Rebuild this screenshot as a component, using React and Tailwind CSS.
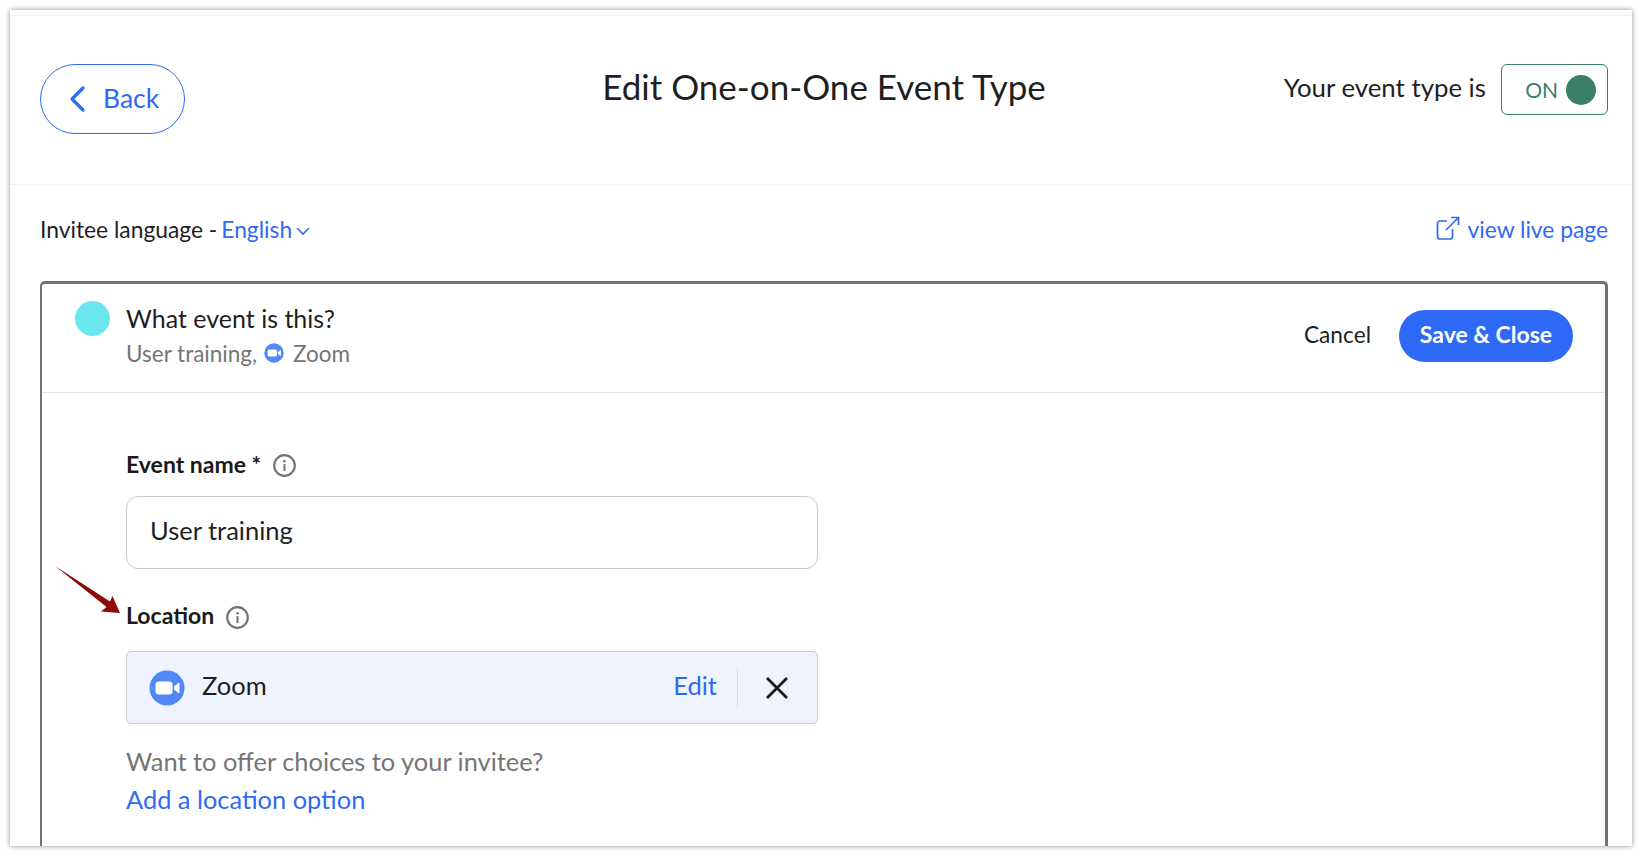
import React from 'react';

const BLUE = 'text-[#2e6af6]';

function ZoomIcon({ size }) {
  return (
    <svg width={size} height={size} viewBox="0 0 36 36" className="shrink-0">
      <circle cx="18" cy="18" r="17.5" fill="#5088f6" />
      <rect x="6.5" y="11.5" width="17" height="13" rx="3" fill="#fff" />
      <path d="M25 16.5l4.6-3.7c.4-.3.9 0 .9.4v9.6c0 .5-.5.7-.9.4L25 19.5z" fill="#fff" />
    </svg>
  );
}

function InfoIcon() {
  return (
    <svg width="23" height="23" viewBox="0 0 23 23" className="shrink-0" fill="none">
      <circle cx="11.5" cy="11.5" r="10.3" stroke="#747474" strokeWidth="2.2" />
      <rect x="10.5" y="10" width="2" height="7" fill="#747474" />
      <circle cx="11.5" cy="7.2" r="1.3" fill="#747474" />
    </svg>
  );
}

function BoldLabel({ children }) {
  return <span className="text-[23px] font-bold leading-none text-[#1a1a1a]">{children}</span>;
}

export default function App() {
  return (
    <div
      className="w-[1642px] h-[856px] overflow-hidden bg-white p-[10px]"
      style={{ fontFamily: 'Lato, "Liberation Sans", sans-serif' }}
    >
      <div className="relative h-full w-full overflow-hidden bg-white shadow-[0_0_5px_rgba(0,0,0,0.45)]">
        <div className="mt-[5px] h-[170px] border-y border-[#f1f1f1] pl-[30px] pr-[24px] pt-[48px] grid grid-cols-[1fr_auto_1fr] items-start">
          <div>
            <button className="flex w-[145px] h-[70px] items-center rounded-[35px] border border-[#2e6af6] pl-[27px] text-[#2e6af6]">
              <svg width="18" height="28" viewBox="0 0 18 28" fill="none" className="shrink-0">
                <path d="M15 3L4 14l11 11" stroke="#2e6af6" strokeWidth="3.2" strokeLinecap="round" strokeLinejoin="round" />
              </svg>
              <span className="ml-[17px] -mt-[2px] text-[26.5px] leading-none">Back</span>
            </button>
          </div>
          <h1 className="text-[35px] leading-none pt-[5px] text-[#1f1f1f] whitespace-nowrap">Edit One-on-One Event Type</h1>
          <div className="flex items-start justify-end">
            <span className="mt-[11px] text-[25.8px] leading-none text-[#1f1f1f] whitespace-nowrap">Your event type is</span>
            <div className="ml-[15px] flex h-[51px] w-[107px] items-center justify-end rounded-[6px] border border-[#3a7f66] pr-[11px]">
              <span className="text-[21px] leading-none text-[#3a7f66]">ON</span>
              <span className="ml-[8px] h-[30px] w-[30px] rounded-full bg-[#3a7f66]"></span>
            </div>
          </div>
        </div>

        <div className="flex h-[96px] items-start justify-between pl-[30px] pr-[24px] pt-[33px]">
          <div className="flex items-center text-[22.8px] leading-none text-[#1f1f1f]">
            <span>Invitee language -</span>
            <span className={`ml-[4px] ${BLUE}`}>English</span>
            <svg width="14" height="9" viewBox="0 0 14 9" fill="none" className="ml-[4px] mt-[4px]">
              <path d="M1.5 1.5L7 7l5.5-5.5" stroke="#2e6af6" strokeWidth="1.6" strokeLinecap="round" />
            </svg>
          </div>
          <div className={`flex items-center text-[22.8px] leading-none ${BLUE}`}>
            <svg width="24" height="24" viewBox="0 0 24 24" fill="none" className="-mt-[2px]">
              <path d="M11 5H4a2.5 2.5 0 0 0-2.5 2.5v13A2.5 2.5 0 0 0 4 23h10a2.5 2.5 0 0 0 2.5-2.5V13" stroke="#2e6af6" strokeWidth="1.7" />
              <path d="M10 14L22.5 1.5M15 1.5h7.5V9" stroke="#2e6af6" strokeWidth="1.7" />
            </svg>
            <span className="ml-[8px]">view live page</span>
          </div>
        </div>

        <div className="ml-[30px] mr-[24px] h-[600px] rounded-t-[5px] border-l-2 border-r-[3px] border-t-[3px] border-[#6e7180]">
          <div className="flex h-[109px] items-start border-b border-[#e4e4e4] pl-[33px] pr-[32px]">
            <span className="mt-[17px] h-[35px] w-[35px] shrink-0 rounded-full bg-[#69e6ee]"></span>
            <div className="ml-[16px] flex-1 pt-[22px]">
              <div className="text-[25px] leading-none text-[#1f1f1f]">What event is this?</div>
              <div className="mt-[12px] flex items-center text-[22.5px] leading-none text-[#757575]">
                <span>User training,</span>
                <span className="ml-[7px] -mt-[2px]"><ZoomIcon size={20} /></span>
                <span className="ml-[9px]">Zoom</span>
              </div>
            </div>
            <div className="mt-[26px] flex items-center">
              <span className="-mt-[2px] text-[22.7px] leading-none text-[#1f1f1f]">Cancel</span>
              <button className="ml-[28px] h-[52px] w-[174px] rounded-[26px] bg-[#2e6af6] pb-[4px] text-[23px] font-bold leading-none text-white">Save &amp; Close</button>
            </div>
          </div>

          <div className="relative pl-[84px] pt-[59px]">
            <div className="flex items-center">
              <BoldLabel>Event name *</BoldLabel>
              <span className="ml-[12px] mt-[2px]"><InfoIcon /></span>
            </div>
            <div className="mt-[19px] flex h-[73px] w-[692px] items-center rounded-[12px] border border-[#cccccc] pb-[5px] pl-[23px] text-[25.5px] text-[#1f1f1f]">User training</div>

            <div className="relative mt-[33px] flex items-center">
              <BoldLabel>Location</BoldLabel>
              <span className="ml-[12px] mt-[4px]"><InfoIcon /></span>
              {/* annotation arrow */}
              <svg width="70" height="52" viewBox="0 0 70 52" className="absolute left-[-72px] top-[-37px]">
                <path d="M1 1L56 36.5 58.5 31 66 48 47 46.5 52.5 42z" fill="#8e0a0a" />
              </svg>
            </div>
            <div className="mt-[22px] flex h-[73px] w-[692px] items-center rounded-[5px] border border-[#c9cdd6] bg-[#eff3fd] pl-[22px]">
              <ZoomIcon size={36} />
              <span className="ml-[17px] flex-1 pb-[4px] text-[25.5px] leading-none text-[#1f1f1f]">Zoom</span>
              <span className={`pb-[4px] text-[25.5px] leading-none ${BLUE}`}>Edit</span>
              <span className="ml-[20px] h-[38px] w-px bg-[#d5d9e2]"></span>
              <svg width="24" height="24" viewBox="0 0 24 24" fill="none" className="ml-[27px] mr-[28px]">
                <path d="M2 2l20 20M22 2L2 22" stroke="#1a1a1a" strokeWidth="2.8" />
              </svg>
            </div>
            <div className="mt-[25px] text-[25.4px] leading-none text-[#757575]">Want to offer choices to your invitee?</div>
            <div className={`mt-[13px] text-[25.4px] leading-none ${BLUE}`}>Add a location option</div>
          </div>
        </div>
      </div>
    </div>
  );
}
